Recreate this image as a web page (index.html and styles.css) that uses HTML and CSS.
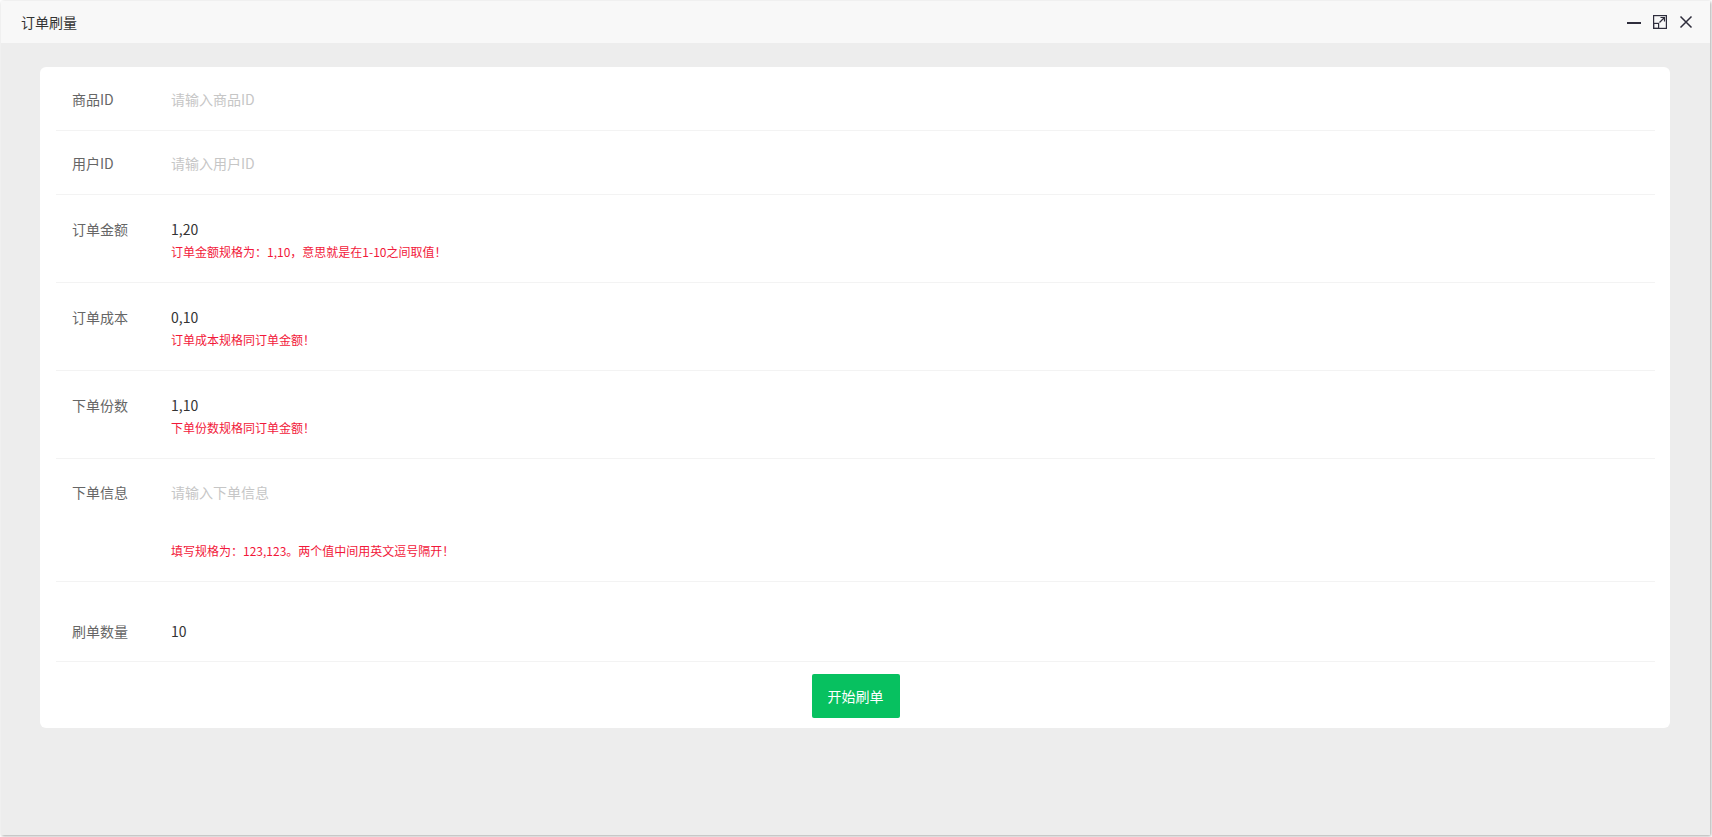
FILE: index.html
```html
<!DOCTYPE html>
<html lang="zh-CN">
<head>
    <meta charset="UTF-8">
    <meta name="viewport" content="width=device-width, initial-scale=1.0">
    <title>订单刷量</title>
    <link rel="stylesheet" href="styles.css">
</head>
<body>

    <div class="layer">
        <div class="layer-title">
            <span class="title-text">订单刷量</span>
            <div class="layer-btns">
                <svg width="14" height="14" viewBox="0 0 14 14"><line x1="0" y1="8" x2="14" y2="8" stroke="#2e2d3c" stroke-width="2"/></svg>
                <svg width="14" height="14" viewBox="0 0 14 14" fill="none" stroke="#2e2d3c" stroke-width="1.2">
                    <rect x="0.6" y="0.6" width="12.8" height="12.8"/>
                    <rect x="0.6" y="8.4" width="5" height="5"/>
                    <path d="M6.5 7.5 L11.5 2.5 M7.5 2.5 H11.5 V6.5"/>
                </svg>
                <svg width="14" height="14" viewBox="0 0 14 14" fill="none" stroke="#2e2d3c" stroke-width="1.5"><path d="M1.5 1.5 L12.5 12.5 M12.5 1.5 L1.5 12.5"/></svg>
            </div>
        </div>

        <div class="layer-content">
            <form class="card" id="orderForm">
                <div class="form-row">
                    <label for="goods">商品ID</label>
                    <div class="field">
                        <input type="text" id="goods" name="goods" placeholder="请输入商品ID">
                    </div>
                </div>

                <div class="form-row">
                    <label for="user">用户ID</label>
                    <div class="field">
                        <input type="text" id="user" name="user" placeholder="请输入用户ID">
                    </div>
                </div>

                <div class="form-row help-row">
                    <label for="amount">订单金额</label>
                    <div class="field">
                        <input type="text" id="amount" name="amount" value="1,20">
                        <p class="tip">订单金额规格为：1,10，意思就是在1-10之间取值！</p>
                    </div>
                </div>

                <div class="form-row help-row">
                    <label for="cost">订单成本</label>
                    <div class="field">
                        <input type="text" id="cost" name="cost" value="0,10">
                        <p class="tip">订单成本规格同订单金额！</p>
                    </div>
                </div>

                <div class="form-row help-row">
                    <label for="num">下单份数</label>
                    <div class="field">
                        <input type="text" id="num" name="num" value="1,10">
                        <p class="tip">下单份数规格同订单金额！</p>
                    </div>
                </div>

                <div class="form-row info-row">
                    <label for="info">下单信息</label>
                    <div class="field">
                        <textarea id="info" name="info" placeholder="请输入下单信息"></textarea>
                        <p class="tip">填写规格为：123,123。两个值中间用英文逗号隔开！</p>
                    </div>
                </div>

                <div class="form-row count-row">
                    <label for="count">刷单数量</label>
                    <div class="field">
                        <input type="text" id="count" name="count" value="10">
                    </div>
                </div>

                <div class="submit-container">
                    <button type="button">开始刷单</button>
                </div>
            </form>
        </div>
    </div>

</body>
</html>
```

FILE: styles.css
```css
html, body {
    margin: 0;
    height: 837px;
    overflow: hidden;
}

body {
    font-family: "Noto Sans CJK SC", "Liberation Sans", sans-serif;
    font-size: 14px;
    background-color: #fff;
    padding: 1px 2px 2px 1px;
    box-sizing: border-box;
}

.layer {
    height: 834px;
    display: flex;
    flex-direction: column;
    background-color: #ededed;
    box-shadow: 1px 1px 3px rgba(0, 0, 0, 0.35);
}

.layer-title {
    height: 42px;
    display: flex;
    align-items: center;
    justify-content: space-between;
    background-color: #f8f8f8;
    padding: 0 17px 0 20px;
    flex-shrink: 0;
}

.title-text {
    color: #333;
    font-size: 14px;
}

.layer-btns {
    display: flex;
    gap: 12px;
    align-items: center;
}

.layer-content {
    padding: 24px 40px 0 39px;
}

.card {
    background-color: #fff;
    border-radius: 6px;
    padding: 0 15px 0 16px;
    margin: 0;
}

.form-row {
    display: flex;
    padding: 22px 16px 21px;
    border-bottom: 1px solid #f3f3f3;
}

.form-row label {
    width: 99px;
    flex-shrink: 0;
    line-height: 20px;
    color: #666;
}

.field {
    flex: 1;
}

.field input,
.field textarea {
    display: block;
    width: 100%;
    border: none;
    outline: none;
    padding: 0;
    margin: 0;
    font-family: inherit;
    font-size: 14px;
    line-height: 20px;
    height: 20px;
    color: #333;
    background: transparent;
}

.field input::placeholder,
.field textarea::placeholder {
    color: #c6c6c6;
}

.field textarea {
    height: 56px;
    resize: none;
}

.tip {
    margin: 5px 0 0;
    font-size: 12px;
    line-height: 16px;
    color: #f2183a;
}

.help-row {
    padding: 24px 16px 22px;
}

.info-row {
    padding: 23px 16px 22px;
}

.count-row {
    padding: 39px 16px 20px;
}

.submit-container {
    text-align: center;
    padding: 12px 0 10px;
}

button {
    width: 88px;
    height: 44px;
    background-color: #07c160;
    color: white;
    border: none;
    border-radius: 2px;
    font-family: inherit;
    font-size: 14px;
    cursor: pointer;
}
```
